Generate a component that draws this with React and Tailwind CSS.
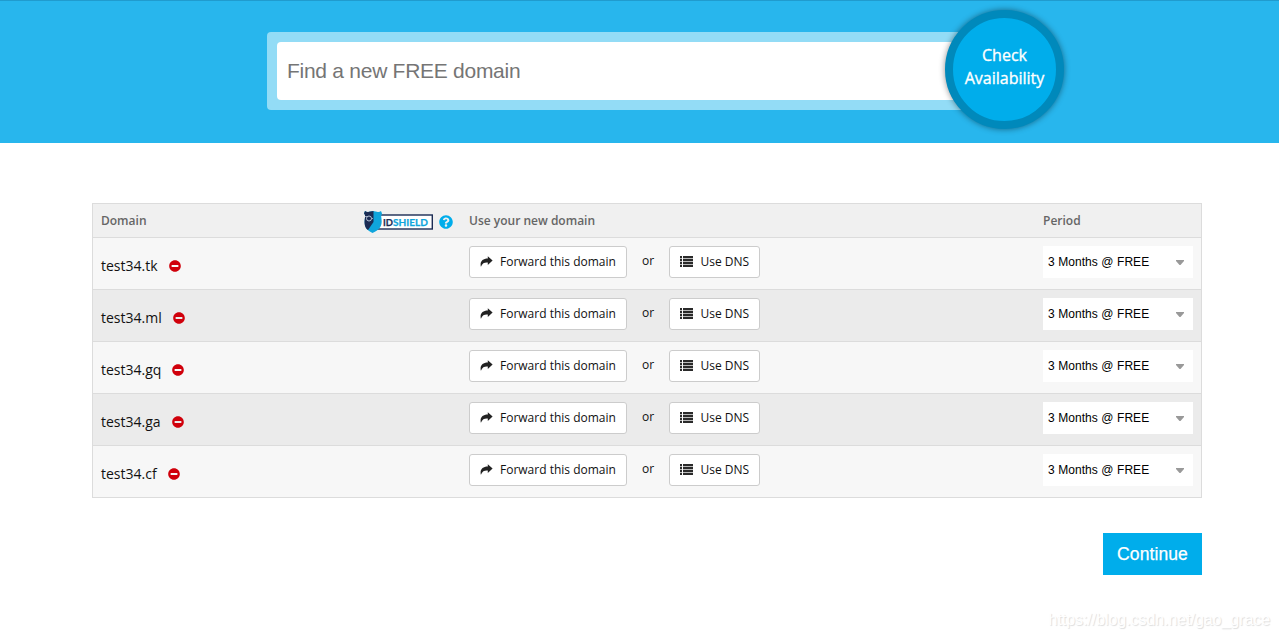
import React from 'react';
import { FaMinusCircle, FaQuestionCircle } from 'react-icons/fa';

const domains = ['test34.tk', 'test34.ml', 'test34.gq', 'test34.ga', 'test34.cf'];

const ForwardIcon = () => (
    <svg className="w-[13px] h-[12px] shrink-0" viewBox="0 0 13 12" fill="#222">
        <path d="M7.8 .3 12.6 4.6 7.8 8.9V6.6C4.6 6.4 2.4 7 .9 10.8-.4 5.4 2.6 2.6 7.8 2.5Z" />
    </svg>
);

const ListIcon = () => (
    <svg className="w-[13px] h-[12px] shrink-0" viewBox="0 0 13 12" shapeRendering="crispEdges">
        <path d="M0 0h2v11H0zM3 0h10v11H3z" fill="#bbb" />
        {[0, 3, 6, 9].map((y) => (
            <g key={y} fill="#2a2a2a">
                <rect x="0" y={y} width="2" height="2" />
                <rect x="3" y={y} width="10" height="2" />
            </g>
        ))}
    </svg>
);

const ShieldLogo = () => (
    <svg className="w-[70px] h-[23px] shrink-0" viewBox="0 0 70 23">
        <rect x="12" y="4" width="57.3" height="14" fill="#fff" stroke="#1c2c54" strokeWidth="1.4" />
        <path d="M2 0Q4 1.6 6 .8L10 0l4 .8Q16 1.6 18 0l1 2.5Q17.5 5 18.5 8c1 7-2 11-9 14C3 19 1 15 1.8 8 2.4 5 2 3 1 2.5Z" fill="#0fa5dc" />
        <path d="M2 0Q4 1.6 6 .8L10.5 0v11L5 19C2 17 1 13 1.8 8 2.4 5 2 3 1 2.5Z" fill="#1c2c54" />
        <circle cx="6" cy="7.5" r="2.5" fill="none" stroke="#b6c3d6" strokeWidth="1" />
        <path d="M2 5.5h2.5M8.5 7.5h1.5" stroke="#b6c3d6" strokeWidth=".8" />
        <text x="20" y="14.6" fontSize="10.3" fontWeight="700" fontFamily="Lato, sans-serif" fill="#1c2c54" stroke="#1c2c54" strokeWidth=".25" textLength="10" lengthAdjust="spacingAndGlyphs">ID</text>
        <text x="30" y="14.6" fontSize="10.3" fontWeight="700" fontFamily="Lato, sans-serif" fill="#0fa5dc" stroke="#0fa5dc" strokeWidth=".25" textLength="35" lengthAdjust="spacingAndGlyphs">SHIELD</text>
    </svg>
);

const DomainRow = ({ name, striped }) => (
    <div className={`flex h-[52px] border-b border-[#dcdcdc] ${striped ? 'bg-[#ebebeb]' : 'bg-[#f7f7f7]'}`}>
        <div className="w-[376px] pl-2 pt-[17px] flex items-start">
            <span className="text-[14px] leading-[22px] text-[#111]">{name}</span>
            <FaMinusCircle className="w-3 h-3 mt-[5px] ml-[11px] text-[#d0000b]" />
        </div>
        <div className="w-[574px] flex items-start pt-2 text-[12px] text-[#111]">
            <button className="w-[158px] h-8 pl-[10px] pb-px flex items-center bg-white border border-[#ccc] rounded-[3px] whitespace-nowrap">
                <ForwardIcon />
                <span className="ml-[7px]">Forward this domain</span>
            </button>
            <span className="w-[42px] text-center leading-[29px]">or</span>
            <button className="w-[91px] h-8 pl-[10px] pb-px flex items-center bg-white border border-[#ccc] rounded-[3px] whitespace-nowrap">
                <ListIcon />
                <span className="ml-[7.5px]">Use DNS</span>
            </button>
        </div>
        <div className="pt-2">
            <div className="w-[150px] h-8 pl-[5px] pr-[9px] flex items-center justify-between bg-white font-['Liberation_Sans',sans-serif] text-[12px] text-black">
                <span className="tracking-[0.07px]">3 Months @ FREE</span>
                <svg className="w-2 h-[5px]" viewBox="0 0 8 5" fill="#999">
                    <path d="M0 0h8v1L4.5 5h-1L0 1z" />
                </svg>
            </div>
        </div>
    </div>
);

const App = () => {
    return (
        <div className="relative h-[638px] overflow-hidden bg-white font-['Open_Sans',sans-serif]">
            <header className="h-[143px] bg-[#28b6ed] border-t border-[#209bce] pl-[267px] pt-[31px]">
                <div className="relative w-[745px] h-[78px] p-[10px] rounded-[4px] bg-[#93dcf6]">
                    <div className="h-[58px] pl-[10px] flex items-center rounded-[4px] bg-white font-['Liberation_Sans',sans-serif] text-[21px] text-[#757575]">
                        <span className="tracking-[-0.27px]">Find a new FREE domain</span>
                    </div>
                    <button className="absolute left-[678px] top-[-22px] w-[119px] h-[119px] pb-[6px] rounded-full border-[8.5px] border-[#0089bb] bg-[#00adeb] text-white text-[16px] leading-[23px] font-medium shadow-[0_0_6px_rgba(0,0,0,0.45)] [-webkit-text-stroke:0.35px_white]">
                        Check<br />Availability
                    </button>
                </div>
            </header>

            <main className="w-[1110px] ml-[92px] mt-[60px]">
                <div className="border border-b-0 border-[#dcdcdc]">
                    <div className="flex items-center h-[34px] bg-[#f0f0f0] border-b border-[#dcdcdc] text-[12px] font-semibold text-[#666]">
                        <span className="w-[270px] pl-2">Domain</span>
                        <div className="w-[106px] flex items-center pt-1">
                            <ShieldLogo />
                            <FaQuestionCircle className="w-[14px] h-[14px] ml-[6px] mb-px text-[#00adeb]" />
                        </div>
                        <span className="w-[574px]">Use your new domain</span>
                        <span>Period</span>
                    </div>
                    {domains.map((name, i) => (
                        <DomainRow key={name} name={name} striped={i % 2 === 1} />
                    ))}
                </div>
                <div className="flex justify-end pt-[35px]">
                    <button className="w-[99px] h-[42px] bg-[#00adeb] text-white font-['Liberation_Sans',sans-serif] text-[17.5px] tracking-[0.1px] [-webkit-text-stroke:0.25px_white]">Continue</button>
                </div>
            </main>

            <div className="absolute right-[9px] bottom-[6px] font-['Liberation_Sans',sans-serif] text-[16px] tracking-[-0.06px] text-white [text-shadow:1px_1px_1px_#ddd]">
                https://blog.csdn.net/gao_grace
            </div>
        </div>
    );
};

export default App;
